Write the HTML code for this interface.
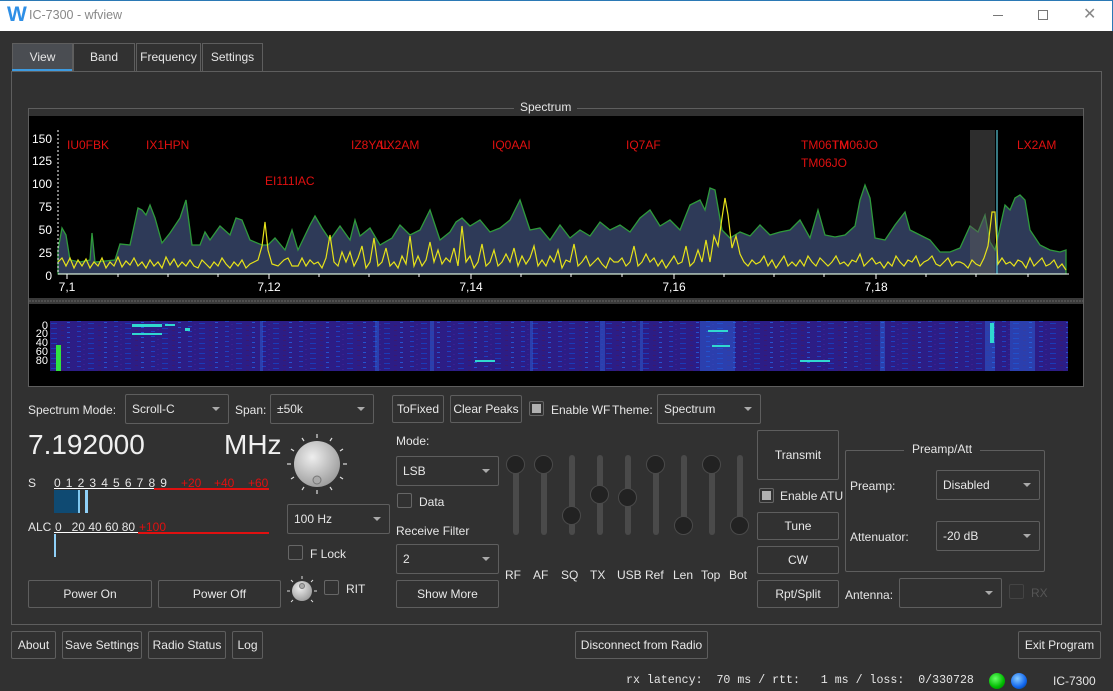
<!DOCTYPE html>
<html><head><meta charset="utf-8"><style>
*{box-sizing:border-box;margin:0;padding:0}
body{width:1113px;height:691px;overflow:hidden;background:#313131;font-family:"Liberation Sans",sans-serif;font-size:12px;color:#e6e6e6;position:relative}
.a{position:absolute}
.btn{position:absolute;border:1px solid #5e5e5e;border-radius:2px;background:#313131;color:#e8e8e8;text-align:center;font-size:12px}
.cb{position:absolute;border:1px solid #5e5e5e;border-radius:2px;background:#313131;font-size:12px;padding-left:6px}
.cb:after{content:"";position:absolute;right:8px;top:50%;margin-top:-2px;border-left:4px solid transparent;border-right:4px solid transparent;border-top:4px solid #aaa}
.chk{position:absolute;width:15px;height:15px;border:1px solid #666;border-radius:2px;background:#313131}
.chk.on:after{content:"";position:absolute;left:2px;top:2px;width:9px;height:9px;background:#b0b0b0}
.tab{position:absolute;top:43px;height:28px;border:1px solid #5e5e5e;border-bottom:none;background:#313131;text-align:center;line-height:27px;font-size:12px}
.sl{position:absolute;top:455px;width:6px;height:80px;background:#4a4a4a;border-radius:3px}
.kn{position:absolute;width:19px;height:19px;border-radius:50%;background:#222;border:1px solid #4a4a4a;left:-7px}
.lbl{position:absolute;font-size:12px}
</style></head><body>
<div class="a" style="left:0;top:0;width:1113px;height:31px;background:#fff;border-top:1px solid #2b79b5;border-right:1px solid #2b79b5"></div>
<div class="a" style="left:7px;top:3px;font-size:21px;font-weight:bold;color:#2e8fe6">W</div>
<div class="a" style="left:29px;top:8px;font-size:12.5px;color:#888">IC-7300 - wfview</div>
<div class="a" style="left:993px;top:15px;width:10px;height:1px;background:#777"></div>
<div class="a" style="left:1038px;top:10px;width:10px;height:10px;border:1px solid #777"></div>
<div class="a" style="left:1083px;top:4px;font-size:16px;color:#888">✕</div>
<div class="a" style="left:11px;top:71px;width:1091px;height:554px;border:1px solid #5e5e5e"></div>
<div class="tab" style="left:12px;width:61px;background:#4a4d52">View</div>
<div class="a" style="left:12px;top:69px;width:60px;height:2px;background:#3d9be0"></div>
<div class="tab" style="left:73px;width:62px">Band</div>
<div class="tab" style="left:136px;width:65px">Frequency</div>
<div class="tab" style="left:202px;width:61px">Settings</div>
<div class="a" style="left:28px;top:108px;width:1056px;height:279px;border:1px solid #5e5e5e;background:#000"></div>
<div class="a" style="left:29px;top:100px;width:1054px;height:16px;background:#313131"></div>
<div class="a" style="left:28px;top:108px;width:1056px;height:1px;background:#5e5e5e"></div>
<div class="a" style="left:514px;top:100px;padding:0 6px;background:#313131">Spectrum</div>
<svg class="a" style="left:29px;top:116px" width="1054" height="270" viewBox="29 116 1054 270">
<g fill="#fff" font-size="12" font-family="Liberation Sans" text-anchor="end">
<text x="52" y="143">150</text><text x="52" y="165">125</text><text x="52" y="188">100</text><text x="52" y="211">75</text><text x="52" y="234">50</text><text x="52" y="257">25</text><text x="52" y="280">0</text>
</g>
<path d="M58,250L62,228 66,235 70,260 80,262 90,260 92,233 95,262 115,260 120,244 130,245 138,208 142,210 146,215 150,205 155,218 162,243 170,233 180,218 186,200 192,245 200,245 205,232 210,240 220,226 230,235 236,218 242,220 250,240 262,245 268,245 275,238 285,250 292,230 298,250 310,225 315,216 322,228 330,240 340,226 350,240 355,220 360,236 370,228 380,245 392,238 400,225 410,235 420,230 430,210 440,240 450,232 456,222 462,218 470,226 480,220 490,232 500,228 510,220 520,200 525,215 530,230 540,228 550,240 560,225 570,238 580,230 590,236 600,222 610,230 620,225 630,232 640,218 650,210 660,226 670,220 680,230 690,205 700,200 705,210 710,188 715,190 722,230 730,238 740,232 750,236 760,225 770,235 780,232 790,230 800,220 810,238 818,210 825,235 835,237 845,235 855,226 860,200 865,185 870,198 875,238 885,240 895,225 905,212 910,230 920,235 930,240 940,252 950,252 960,248 970,226 978,232 985,215 990,242 995,250 1005,205 1010,210 1015,198 1020,195 1025,200 1030,230 1040,245 1050,250 1060,252 1066,250L1066,274 58,274Z" fill="#2e3a58" stroke="#2f9a3c" stroke-width="1.3"/>
<rect x="970" y="130" width="25" height="144" fill="#5a5a5a" opacity="0.5"/>
<line x1="997" y1="130" x2="997" y2="274" stroke="#5bc8d8" stroke-width="1.2"/>
<path d="M58,262L62,258 66,266 70,258 74,268 78,260 82,266 86,259 90,268 94,262 98,266 102,258 106,268 110,262 114,266 118,257 122,267 126,261 130,265 134,258 138,266 142,262 146,268 150,260 154,266 158,262 162,268 166,257 170,265 174,259 178,267 182,262 186,266 190,260 194,266 198,268 202,260 206,264 210,268 214,262 218,266 222,258 226,264 230,268 234,262 238,266 242,260 246,268 250,264 254,262 258,260 262,246 265,222 268,250 272,264 278,266 284,260 288,258 292,266 298,266 302,258 306,266 310,260 314,264 318,262 322,268 326,258 330,235 334,262 338,266 342,252 346,262 350,252 354,266 358,258 362,246 366,268 370,262 374,238 378,266 382,262 386,248 390,266 394,262 398,268 402,256 406,264 410,236 414,266 418,256 422,266 426,260 430,242 434,262 438,250 442,264 446,258 450,262 454,248 458,266 462,226 466,262 470,256 474,268 478,262 482,244 486,266 490,262 494,250 498,266 502,262 506,254 510,262 514,248 518,266 522,256 526,264 530,258 534,246 538,266 542,260 546,266 550,256 554,262 558,250 562,268 566,260 570,262 574,244 578,266 582,262 586,256 590,266 594,262 598,258 602,264 606,268 610,258 614,262 618,262 622,258 626,266 630,262 634,246 638,266 642,262 646,254 650,262 654,258 658,266 662,260 666,268 670,262 674,256 678,264 682,262 686,246 690,266 694,262 698,250 702,262 706,240 710,262 714,236 718,246 722,218 725,198 728,215 732,248 736,236 740,254 744,262 748,266 752,260 756,264 760,262 764,256 768,266 772,260 776,268 780,262 784,256 788,266 792,262 796,266 800,260 804,266 808,256 812,262 816,266 820,258 824,262 828,266 832,262 836,256 840,264 844,262 848,266 852,260 856,262 860,254 864,266 868,262 872,258 876,264 880,262 884,268 888,262 892,266 896,256 900,262 904,266 908,260 912,262 916,256 920,266 924,262 928,260 932,256 936,264 940,266 944,262 948,258 952,266 956,262 960,262 964,264 968,268 972,260 976,264 980,266 984,258 988,246 992,212 995,212 998,264 1002,258 1006,264 1010,262 1014,266 1018,260 1022,262 1026,268 1030,258 1034,266 1038,262 1042,258 1046,266 1050,264 1054,260 1058,268 1062,264 1066,270" fill="none" stroke="#e6e21a" stroke-width="1.2"/>
<line x1="58" y1="274" x2="1069" y2="274" stroke="#fff"/>
<line x1="58" y1="130" x2="58" y2="274" stroke="#fff" stroke-dasharray="2,2"/>
<g stroke="#fff"><line x1="67" y1="274" x2="67" y2="279"/><line x1="118" y1="274" x2="118" y2="277"/><line x1="168" y1="274" x2="168" y2="277"/><line x1="218" y1="274" x2="218" y2="277"/><line x1="269" y1="274" x2="269" y2="279"/><line x1="319" y1="274" x2="319" y2="277"/><line x1="369" y1="274" x2="369" y2="277"/><line x1="419" y1="274" x2="419" y2="277"/><line x1="471" y1="274" x2="471" y2="279"/><line x1="521" y1="274" x2="521" y2="277"/><line x1="571" y1="274" x2="571" y2="277"/><line x1="622" y1="274" x2="622" y2="277"/><line x1="674" y1="274" x2="674" y2="279"/><line x1="724" y1="274" x2="724" y2="277"/><line x1="774" y1="274" x2="774" y2="277"/><line x1="824" y1="274" x2="824" y2="277"/><line x1="876" y1="274" x2="876" y2="279"/><line x1="926" y1="274" x2="926" y2="277"/><line x1="976" y1="274" x2="976" y2="277"/><line x1="1028" y1="274" x2="1028" y2="277"/></g>
<g fill="#fff" font-size="12" font-family="Liberation Sans" text-anchor="middle"><text x="67" y="291">7,1</text><text x="269" y="291">7,12</text><text x="471" y="291">7,14</text><text x="674" y="291">7,16</text><text x="876" y="291">7,18</text></g>
<g fill="#e01010" font-size="12" font-family="Liberation Sans"><text x="67" y="149">IU0FBK</text><text x="146" y="149">IX1HPN</text><text x="265" y="185">EI111IAC</text><text x="351" y="149">IZ8YAL</text><text x="380" y="149">LX2AM</text><text x="492" y="149">IQ0AAI</text><text x="626" y="149">IQ7AF</text><text x="801" y="149">TM06TM</text><text x="832" y="149">TM06JO</text><text x="801" y="167">TM06JO</text><text x="1017" y="149">LX2AM</text></g>
<rect x="29" y="298" width="1054" height="6" fill="#3a3a3a"/>
<line x1="29" y1="301" x2="1083" y2="301" stroke="#666" stroke-dasharray="2,1"/>
<g fill="#fff" font-size="11" font-family="Liberation Sans" text-anchor="end"><text x="48" y="329">0</text><text x="48" y="337">20</text><text x="48" y="346">40</text><text x="48" y="355">60</text><text x="48" y="364">80</text></g>
<defs><pattern id="wf" width="37" height="5" patternUnits="userSpaceOnUse"><rect width="37" height="5" fill="#2c1d86"/><rect x="3" y="1" width="4" height="1" fill="#1f3fc0"/><rect x="14" y="3" width="6" height="1" fill="#1a3ab8"/><rect x="24" y="0" width="3" height="1" fill="#3b1a6e"/><rect x="30" y="2" width="3" height="1" fill="#2452d0"/><rect x="9" y="4" width="2" height="1" fill="#3a2090"/></pattern></defs>
<rect x="50" y="321" width="1018" height="50" fill="url(#wf)"/>
<g fill="#2a6ae0" opacity="0.45"><rect x="260" y="321" width="3" height="50"/><rect x="375" y="321" width="4" height="50"/><rect x="430" y="321" width="4" height="50"/><rect x="600" y="321" width="5" height="50"/><rect x="700" y="321" width="35" height="50"/><rect x="985" y="321" width="10" height="50"/><rect x="880" y="321" width="5" height="50"/><rect x="1010" y="321" width="25" height="50"/><rect x="640" y="321" width="3" height="50"/><rect x="530" y="321" width="3" height="50"/></g>
<g fill="#30d8d0"><rect x="132" y="324" width="30" height="3"/><rect x="132" y="333" width="30" height="2"/><rect x="165" y="324" width="10" height="2"/><rect x="185" y="328" width="5" height="3"/><rect x="708" y="330" width="20" height="2"/><rect x="712" y="345" width="18" height="2"/><rect x="990" y="323" width="4" height="20"/><rect x="475" y="360" width="20" height="2"/><rect x="800" y="360" width="30" height="2"/><rect x="56" y="345" width="5" height="26" fill="#30e040"/></g>
</svg>
<div class="lbl" style="left:28px;top:403px">Spectrum Mode:</div>
<div class="cb" style="left:125px;top:394px;width:104px;height:30px;line-height:28px">Scroll-C</div>
<div class="lbl" style="left:235px;top:403px">Span:</div>
<div class="cb" style="left:270px;top:394px;width:104px;height:30px;line-height:28px">±50k</div>
<div class="btn" style="left:392px;top:395px;width:52px;height:28px;line-height:26px">ToFixed</div>
<div class="btn" style="left:450px;top:395px;width:72px;height:28px;line-height:26px">Clear Peaks</div>
<div class="chk on" style="left:529px;top:401px"></div>
<div class="lbl" style="left:551px;top:403px">Enable WF</div>
<div class="lbl" style="left:612px;top:403px">Theme:</div>
<div class="cb" style="left:657px;top:394px;width:104px;height:30px;line-height:28px">Spectrum</div>
<div class="a" style="left:28px;top:429px;font-size:28px;color:#f0f0f0">7.192000</div>
<div class="a" style="left:224px;top:429px;font-size:28px;color:#f0f0f0">MHz</div>
<svg class="a" style="left:285px;top:432px" width="64" height="64" viewBox="0 0 64 64">
<defs><radialGradient id="kg" cx="0.4" cy="0.35" r="0.7"><stop offset="0" stop-color="#eee"/><stop offset="1" stop-color="#9a9a9a"/></radialGradient></defs>
<g stroke="#ddd" stroke-width="1.2"><line x1="32" y1="2" x2="32" y2="6"/><line x1="47" y1="6" x2="45" y2="9"/><line x1="58" y1="17" x2="55" y2="19"/><line x1="62" y1="32" x2="58" y2="32"/><line x1="58" y1="47" x2="55" y2="45"/><line x1="47" y1="58" x2="45" y2="55"/><line x1="32" y1="62" x2="32" y2="58"/><line x1="17" y1="58" x2="19" y2="55"/><line x1="6" y1="47" x2="9" y2="45"/><line x1="2" y1="32" x2="6" y2="32"/><line x1="6" y1="17" x2="9" y2="19"/><line x1="17" y1="6" x2="19" y2="9"/></g>
<circle cx="32" cy="32" r="23" fill="url(#kg)"/><circle cx="32" cy="48" r="4" fill="#aaa" stroke="#777"/></svg>
<div class="lbl" style="left:28px;top:476px">S</div>
<div class="a" style="left:54px;top:476px;font-size:12px;letter-spacing:0.9px">0 1 2 3 4 5 6 7 8 9</div>
<div class="a" style="left:181px;top:476px;font-size:12px;color:#e01010">+20</div>
<div class="a" style="left:214px;top:476px;font-size:12px;color:#e01010">+40</div>
<div class="a" style="left:248px;top:476px;font-size:12px;color:#e01010">+60</div>
<div class="a" style="left:54px;top:488px;width:100px;height:1px;background:#fff"></div>
<div class="a" style="left:154px;top:488px;width:115px;height:2px;background:#e01010"></div>
<div class="a" style="left:54px;top:490px;width:25px;height:23px;background:#0f4a72"></div>
<div class="a" style="left:78px;top:490px;width:2px;height:23px;background:#7fc8f0"></div>
<div class="a" style="left:85px;top:490px;width:3px;height:23px;background:#8fd0f8"></div>
<div class="lbl" style="left:28px;top:520px">ALC</div>
<div class="a" style="left:55px;top:520px;font-size:12px">0 &nbsp;&nbsp;20 40 60 80</div>
<div class="a" style="left:139px;top:520px;font-size:12px;color:#e01010">+100</div>
<div class="a" style="left:54px;top:532px;width:84px;height:1px;background:#fff"></div>
<div class="a" style="left:138px;top:532px;width:131px;height:2px;background:#e01010"></div>
<div class="a" style="left:54px;top:534px;width:2px;height:23px;background:#8fd0f8"></div>
<div class="cb" style="left:287px;top:504px;width:103px;height:30px;line-height:28px">100 Hz</div>
<div class="chk" style="left:288px;top:545px"></div>
<div class="lbl" style="left:310px;top:547px">F Lock</div>
<svg class="a" style="left:286px;top:575px" width="32" height="32" viewBox="0 0 32 32"><g stroke="#ddd"><line x1="16" y1="1" x2="16" y2="4"/><line x1="27" y1="5" x2="25" y2="7"/><line x1="31" y1="16" x2="28" y2="16"/><line x1="27" y1="27" x2="25" y2="25"/><line x1="5" y1="27" x2="7" y2="25"/><line x1="1" y1="16" x2="4" y2="16"/><line x1="5" y1="5" x2="7" y2="7"/></g><circle cx="16" cy="16" r="10" fill="url(#kg)"/><circle cx="16" cy="11" r="2.5" fill="#aaa" stroke="#777"/></svg>
<div class="chk" style="left:324px;top:580px"></div>
<div class="lbl" style="left:346px;top:582px">RIT</div>
<div class="btn" style="left:28px;top:580px;width:124px;height:28px;line-height:26px">Power On</div>
<div class="btn" style="left:158px;top:580px;width:123px;height:28px;line-height:26px">Power Off</div>
<div class="lbl" style="left:396px;top:434px">Mode:</div>
<div class="cb" style="left:396px;top:456px;width:103px;height:30px;line-height:28px">LSB</div>
<div class="chk" style="left:397px;top:493px"></div>
<div class="lbl" style="left:419px;top:495px">Data</div>
<div class="lbl" style="left:396px;top:524px">Receive Filter</div>
<div class="cb" style="left:396px;top:544px;width:103px;height:30px;line-height:28px">2</div>
<div class="btn" style="left:396px;top:580px;width:103px;height:28px;line-height:26px">Show More</div>
<div class="sl" style="left:513px"><div class="kn" style="top:0"></div></div>
<div class="sl" style="left:541px"><div class="kn" style="top:0"></div></div>
<div class="sl" style="left:569px"><div class="kn" style="top:51px"></div></div>
<div class="sl" style="left:597px"><div class="kn" style="top:30px"></div></div>
<div class="sl" style="left:625px"><div class="kn" style="top:33px"></div></div>
<div class="sl" style="left:653px"><div class="kn" style="top:0"></div></div>
<div class="sl" style="left:681px"><div class="kn" style="top:61px"></div></div>
<div class="sl" style="left:709px"><div class="kn" style="top:0"></div></div>
<div class="sl" style="left:737px"><div class="kn" style="top:61px"></div></div>
<div class="a" style="left:505px;top:568px">RF</div>
<div class="a" style="left:533px;top:568px">AF</div>
<div class="a" style="left:561px;top:568px">SQ</div>
<div class="a" style="left:590px;top:568px">TX</div>
<div class="a" style="left:617px;top:568px">USB</div>
<div class="a" style="left:645px;top:568px">Ref</div>
<div class="a" style="left:673px;top:568px">Len</div>
<div class="a" style="left:701px;top:568px">Top</div>
<div class="a" style="left:729px;top:568px">Bot</div>
<div class="btn" style="left:757px;top:430px;width:82px;height:50px;line-height:48px">Transmit</div>
<div class="chk on" style="left:759px;top:488px"></div>
<div class="lbl" style="left:780px;top:489px">Enable ATU</div>
<div class="btn" style="left:757px;top:512px;width:82px;height:28px;line-height:26px">Tune</div>
<div class="btn" style="left:757px;top:546px;width:82px;height:28px;line-height:26px">CW</div>
<div class="btn" style="left:757px;top:580px;width:82px;height:28px;line-height:26px">Rpt/Split</div>
<div class="a" style="left:845px;top:450px;width:200px;height:122px;border:1px solid #5e5e5e;border-radius:2px"></div>
<div class="a" style="left:904px;top:442px;padding:0 8px;background:#313131">Preamp/Att</div>
<div class="lbl" style="left:850px;top:479px">Preamp:</div>
<div class="cb" style="left:936px;top:470px;width:104px;height:30px;line-height:28px">Disabled</div>
<div class="lbl" style="left:850px;top:530px">Attenuator:</div>
<div class="cb" style="left:936px;top:521px;width:104px;height:30px;line-height:28px">-20 dB</div>
<div class="lbl" style="left:845px;top:588px">Antenna:</div>
<div class="cb" style="left:899px;top:578px;width:103px;height:30px"></div>
<div class="chk" style="left:1009px;top:584px;border-color:#444"></div>
<div class="lbl" style="left:1031px;top:586px;color:#555">RX</div>
<div class="btn" style="left:11px;top:631px;width:45px;height:28px;line-height:26px">About</div>
<div class="btn" style="left:62px;top:631px;width:80px;height:28px;line-height:26px">Save Settings</div>
<div class="btn" style="left:148px;top:631px;width:78px;height:28px;line-height:26px">Radio Status</div>
<div class="btn" style="left:232px;top:631px;width:31px;height:28px;line-height:26px">Log</div>
<div class="btn" style="left:575px;top:631px;width:133px;height:28px;line-height:26px">Disconnect from Radio</div>
<div class="btn" style="left:1018px;top:631px;width:83px;height:28px;line-height:26px">Exit Program</div>
<div class="a" style="left:626px;top:674px;font-family:'Liberation Mono',monospace;font-size:11.6px;white-space:pre">rx latency:  70 ms / rtt:   1 ms / loss:  0/330728</div>
<div class="a" style="left:989px;top:673px;width:16px;height:16px;border-radius:50%;background:radial-gradient(circle at 40% 35%,#6f6,#0b0 60%,#070)"></div>
<div class="a" style="left:1011px;top:673px;width:16px;height:16px;border-radius:50%;background:radial-gradient(circle at 40% 35%,#8cf,#16e 60%,#036)"></div>
<div class="a" style="left:1053px;top:674px">IC-7300</div>
</body></html>
